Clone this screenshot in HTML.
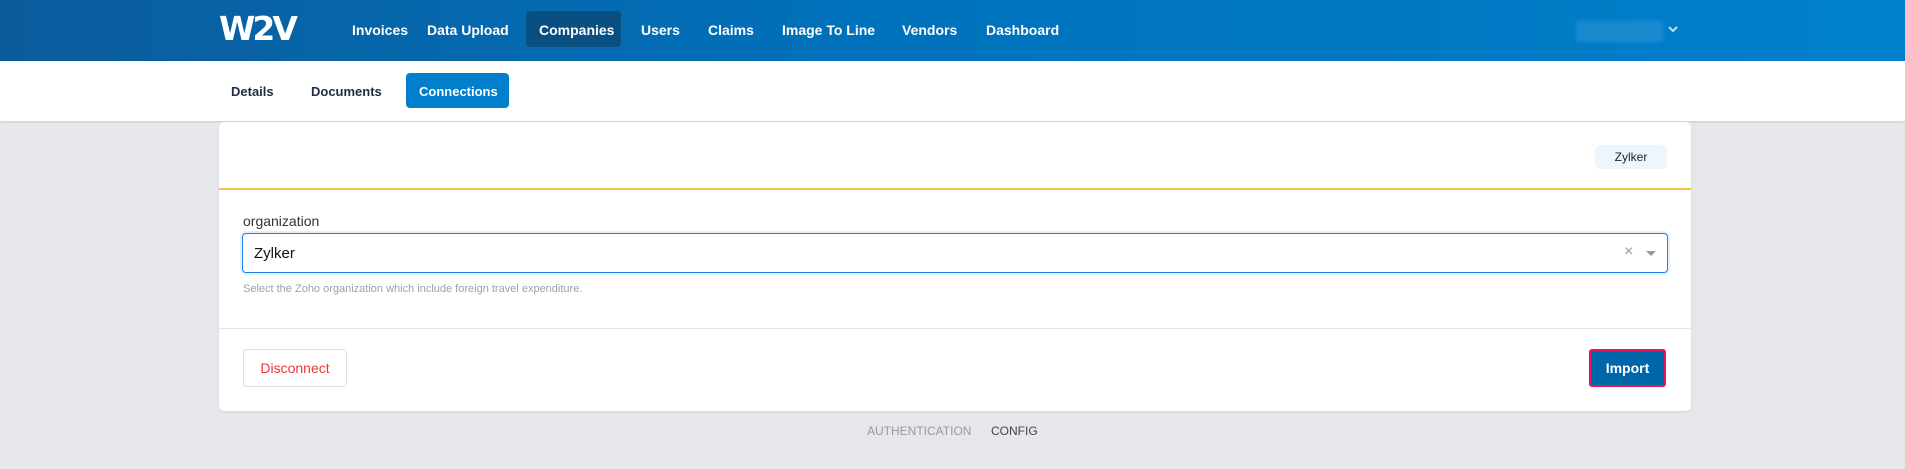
<!DOCTYPE html>
<html><head><meta charset="utf-8"><style>
*{box-sizing:border-box;margin:0;padding:0}
body{width:1905px;height:469px;background:#e6e7eb;font-family:"Liberation Sans",sans-serif;position:relative;overflow:hidden}
.hdr{position:absolute;left:0;top:0;width:1905px;height:61px;background:linear-gradient(90deg,#0b5c9c 0%,#0071bb 45%,#0080cc 100%)}
.a{position:absolute;white-space:nowrap}
.nav{color:#fff;font-size:14px;font-weight:bold;top:22px}
.sub{position:absolute;left:0;top:61px;width:1905px;height:60px;background:#fff;box-shadow:0 1px 2px rgba(0,0,0,.12)}
.card{position:absolute;left:219px;top:122px;width:1472px;height:289px;background:#fff;border-radius:5px;box-shadow:0 1px 2px rgba(0,0,0,.08)}
</style></head><body>
<div class="hdr"></div>
<div class="a" style="left:219px;top:9px;color:#fff;font-size:33px;font-weight:900;letter-spacing:-3px;font-family:'DejaVu Sans',sans-serif">W2V</div>
<div class="a" style="left:526px;top:11px;width:95px;height:36px;background:#0a4f82;border-radius:4px"></div>
<div class="a nav" style="left:352px">Invoices</div>
<div class="a nav" style="left:427px">Data Upload</div>
<div class="a nav" style="left:539px">Companies</div>
<div class="a nav" style="left:641px">Users</div>
<div class="a nav" style="left:708px">Claims</div>
<div class="a nav" style="left:782px">Image To Line</div>
<div class="a nav" style="left:902px">Vendors</div>
<div class="a nav" style="left:986px">Dashboard</div>
<div class="a" style="left:1576px;top:21px;width:87px;height:21px;background:#1a8bd0;filter:blur(2px)"></div>
<svg class="a" style="left:1667px;top:24px" width="12" height="10"><path d="M2 3l4 4 4-4" stroke="#bfe0f7" stroke-width="2" fill="none"/></svg>
<div class="sub"></div>
<div class="a" style="left:406px;top:73px;width:103px;height:35px;background:#0080cc;border-radius:4px"></div>
<div class="a" style="left:231px;top:84px;font-size:13px;font-weight:bold;color:#1f2d3d">Details</div>
<div class="a" style="left:311px;top:84px;font-size:13px;font-weight:bold;color:#1f2d3d">Documents</div>
<div class="a" style="left:419px;top:84px;font-size:13px;font-weight:bold;color:#fff">Connections</div>
<div class="card"></div>
<div class="a" style="left:1595px;top:145px;width:72px;height:24px;background:#eef6fd;border-radius:6px;font-size:12px;color:#222;text-align:center;line-height:24px">Zylker</div>
<div class="a" style="left:219px;top:188px;width:1472px;height:2px;background:#f5c542"></div>
<div class="a" style="left:243px;top:213px;font-size:14px;color:#333">organization</div>
<div class="a" style="left:242px;top:233px;width:1426px;height:40px;border:1px solid #1a7fe6;border-radius:4px;box-shadow:0 0 0 2px #e4f0fc"></div>
<div class="a" style="left:254px;top:245px;font-size:15px;color:#111">Zylker</div>
<div class="a" style="left:1624px;top:243px;font-size:16px;color:#999">×</div>
<svg class="a" style="left:1645px;top:250px" width="12" height="8"><path d="M1 1h10L6 6z" fill="#999"/></svg>
<div class="a" style="left:243px;top:283px;font-size:11px;color:#9aa1ab">Select the Zoho organization which include foreign travel expenditure.</div>
<div class="a" style="left:219px;top:328px;width:1472px;height:1px;background:#e3e5e8"></div>
<div class="a" style="left:243px;top:349px;width:104px;height:38px;border:1px solid #e0e0e0;border-radius:4px;color:#f0353a;font-size:14px;text-align:center;line-height:36px">Disconnect</div>
<div class="a" style="left:1589px;top:349px;width:77px;height:38px;background:#0066aa;border:2px solid #ee1258;border-radius:3px;color:#fff;font-size:14px;font-weight:bold;text-align:center;line-height:34px">Import</div>
<div class="a" style="left:867px;top:424px;font-size:12px;color:#999">AUTHENTICATION</div>
<div class="a" style="left:991px;top:424px;font-size:12px;color:#444">CONFIG</div>
</body></html>
